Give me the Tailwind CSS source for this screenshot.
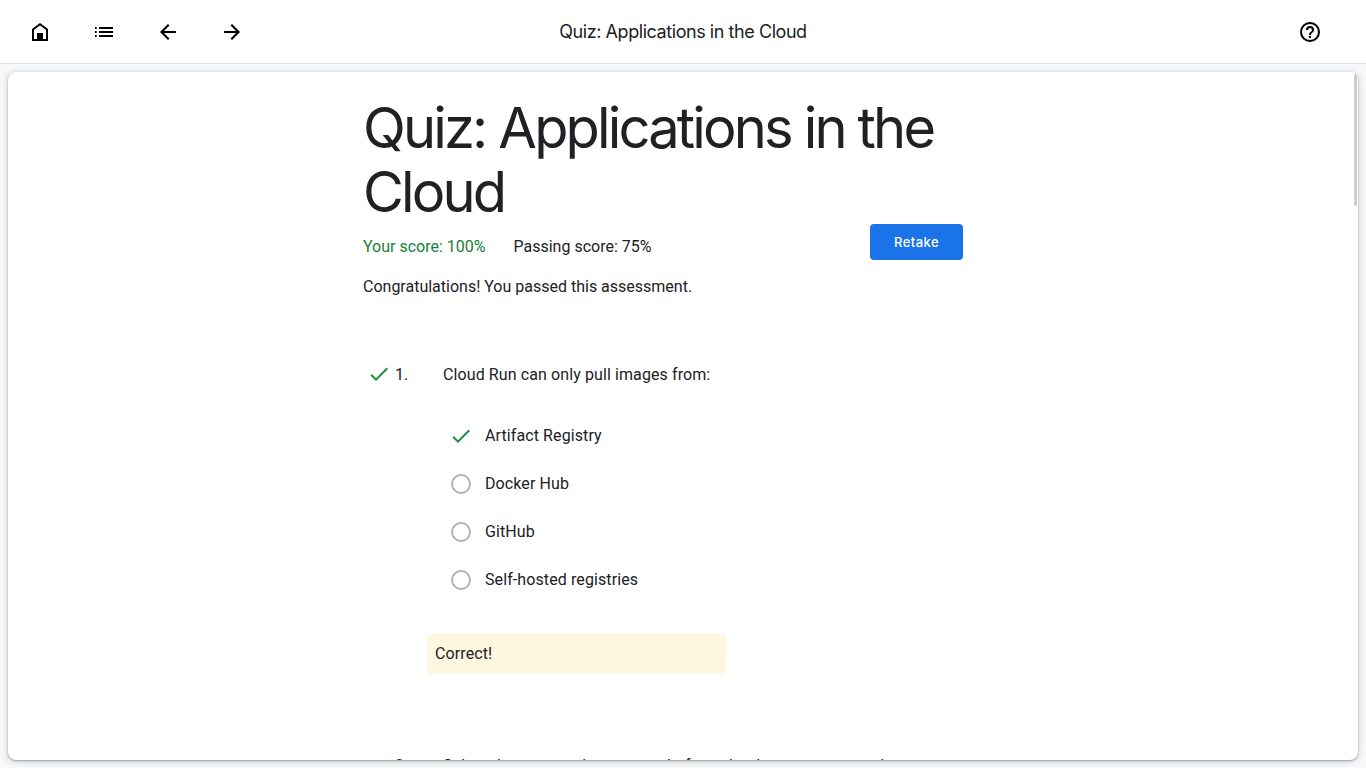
<!DOCTYPE html>
<html lang="en">
<head>
<meta charset="utf-8">
<title>Quiz: Applications in the Cloud</title>
<script src="https://cdn.jsdelivr.net/npm/@tailwindcss/browser@4"></script>
</head>
<body class="flex h-screen flex-col overflow-hidden bg-[#f8f9fa] font-[Roboto,sans-serif] text-base text-[#202124]">
  <header class="grid h-16 shrink-0 grid-cols-3 items-center border-b border-[#dadce0] bg-white text-black">
    <nav class="flex items-center gap-10 pl-7">
      <svg class="size-6" viewBox="0 0 24 24" fill="none" stroke="currentColor" stroke-width="2"><path d="M5 20V9.5L12 4.2l7 5.3V20z"/><path d="M9 13h6v7H9z" fill="currentColor" stroke="none"/></svg>
      <svg class="size-6" viewBox="0 0 24 24" fill="currentColor"><path d="M3 7h1.7v2H3zm0 4h1.7v2H3zm0 4h1.7v2H3zM7 7h14v2H7zm0 4h14v2H7zm0 4h14v2H7z"/></svg>
      <svg class="size-6" viewBox="0 0 24 24" fill="currentColor" stroke="currentColor" stroke-width=".1"><path d="M20 11H7.83l5.59-5.59L12 4l-8 8 8 8 1.41-1.41L7.83 13H20z"/></svg>
      <svg class="size-6" viewBox="0 0 24 24" fill="currentColor" stroke="currentColor" stroke-width=".1"><path d="M12 4l-1.41 1.41L16.17 11H4v2h12.17l-5.58 5.59L12 20l8-8z"/></svg>
    </nav>
    <div class="text-center font-[Inter,sans-serif] text-lg tracking-[-0.44px] whitespace-nowrap text-[#202124]">Quiz: Applications in the Cloud</div>
    <svg class="mr-11 size-6 justify-self-end" viewBox="0 0 24 24" fill="currentColor" stroke="currentColor" stroke-width=".1"><path d="M11 18h2v-2h-2zm1-16a10 10 0 1 0 0 20 10 10 0 0 0 0-20m0 18a8 8 0 1 1 0-16 8 8 0 0 1 0 16m0-14a4 4 0 0 0-4 4h2a2 2 0 1 1 4 0c0 2-3 1.75-3 5h2c0-2.25 3-2.5 3-5a4 4 0 0 0-4-4"/></svg>
  </header>
  <main class="min-h-0 grow p-2">
    <div class="relative h-full overflow-hidden rounded-lg bg-white shadow-[0_1px_2px_rgba(60,64,67,0.4),0_1px_6px_2px_rgba(60,64,67,0.15)]">
      <div class="absolute top-[2px] right-[1px] h-[132px] w-[3px] rounded-sm bg-[#cccccc]"></div>
      <div class="mx-auto w-[640px] pt-6 pr-10">
        <h1 class="font-[Inter,sans-serif] text-[56px] leading-16 font-normal tracking-[-2.83px] whitespace-nowrap">Quiz: Applications in the<br>Cloud</h1>
        <div class="flex h-9 justify-between">
          <div class="flex gap-7 pt-[11px] leading-6"><span class="text-[#188038]">Your score: 100%</span><span>Passing score: 75%</span></div>
          <button class="h-9 w-[93px] rounded bg-[#1a73e8] pt-0.5 font-[Inter,sans-serif] text-[13px] font-medium tracking-[0.45px] text-white">Retake</button>
        </div>
        <p class="pt-[15px] leading-6">Congratulations! You passed this assessment.</p>
        <section class="pt-16 tracking-[0.1px]">
          <div class="flex items-center leading-6">
            <svg class="-mt-0.5 mr-1 ml-1 size-6" viewBox="0 0 24 24" fill="#1e8e3e"><path d="M9 16.17L4.83 12l-1.42 1.41L9 19 21 7l-1.41-1.41z"/></svg>
            <span class="w-12">1.</span><span>Cloud Run can only pull images from:</span>
          </div>
          <div class="mt-[25px] ml-[86px]">
            <div class="flex h-12 items-center gap-3"><svg class="size-6" viewBox="0 0 24 24" fill="#1e8e3e"><path d="M9 16.17L4.83 12l-1.42 1.41L9 19 21 7l-1.41-1.41z"/></svg>Artifact Registry</div>
            <div class="flex h-12 items-center gap-3"><span class="flex size-6 items-center justify-center"><span class="size-5 rounded-full border-2 border-[#b3b3b3]"></span></span>Docker Hub</div>
            <div class="flex h-12 items-center gap-3"><span class="flex size-6 items-center justify-center"><span class="size-5 rounded-full border-2 border-[#b3b3b3]"></span></span>GitHub</div>
            <div class="flex h-12 items-center gap-3"><span class="flex size-6 items-center justify-center"><span class="size-5 rounded-full border-2 border-[#b3b3b3]"></span></span>Self-hosted registries</div>
          </div>
          <div class="mt-[30px] ml-16 flex h-10 w-[299px] items-center rounded bg-[#fef7e0] px-2">Correct!</div>
        </section>
        <section class="pt-20 tracking-[0.1px]">
          <div class="flex items-start leading-6">
            <svg class="mr-1 ml-1 size-6 shrink-0" viewBox="0 0 24 24" fill="#1e8e3e"><path d="M9 16.17L4.83 12l-1.42 1.41L9 19 21 7l-1.41-1.41z"/></svg>
            <span class="w-12 shrink-0">2.</span><span class="whitespace-nowrap">Select the managed compute platform that lets you run stateless<br>containers through web requests or Pub/Sub events.</span>
          </div>
        </section>
      </div>
    </div>
  </main>
</body>
</html>
